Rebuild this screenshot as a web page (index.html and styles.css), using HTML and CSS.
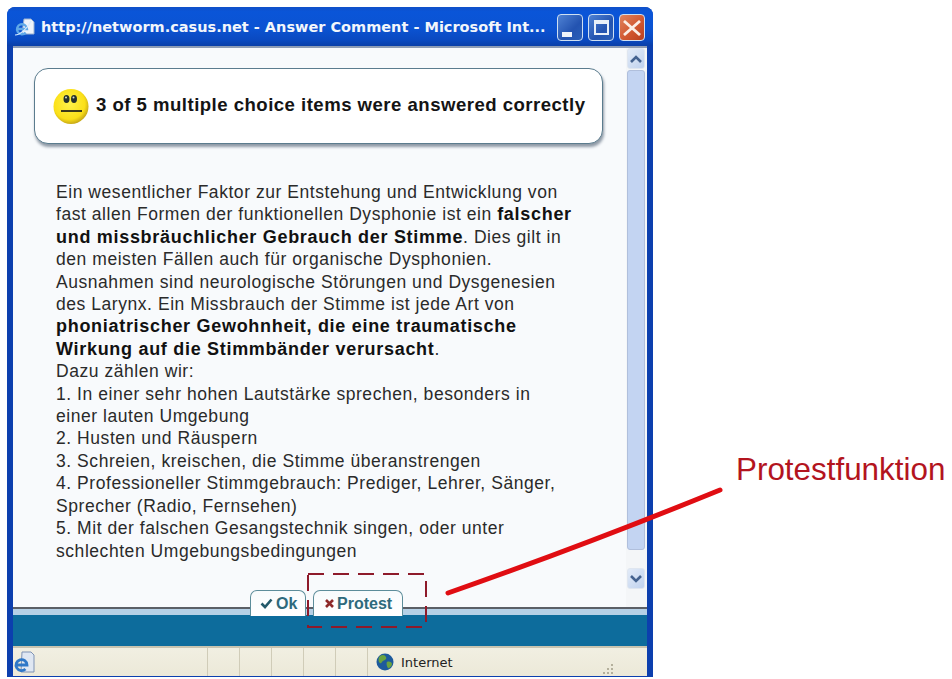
FILE: index.html
```html
<!DOCTYPE html>
<html lang="de">
<head>
<meta charset="utf-8">
<title>Answer Comment</title>
<link rel="stylesheet" href="styles.css">
</head>
<body>
<div class="window">
  <header class="titlebar">
    <svg class="ie-doc" width="20" height="20" viewBox="0 0 20 20">
      <path d="M9 1h7l3 3v12H7z" fill="#eef3fa" stroke="#9ab0d0"/>
      <path d="M2.500 11h9.500a5 5 0 1 0-1.300 3.600" fill="none" stroke="#5fa8e8" stroke-width="2.400"/>
      <path d="M0 17C5 17 13 10 16 3" fill="none" stroke="#d8ecff" stroke-width="1.200"/>
    </svg>
    <span class="title-text">http://networm.casus.net - Answer Comment - Microsoft Int...</span>
    <div class="caption-buttons">
      <span class="cap cap-min"><i></i></span>
      <span class="cap cap-max"><i></i></span>
      <span class="cap cap-close">
        <svg width="18" height="16" viewBox="0 0 18 16"><path d="M1 1l16 14M17 1L1 15" stroke="#fbeee6" stroke-width="2.800"/></svg>
      </span>
    </div>
  </header>

  <div class="client">
    <div class="viewport">
      <main class="page">
        <section class="result-box">
          <svg class="smiley" width="36" height="37" viewBox="0 0 36 37">
            <defs>
              <radialGradient id="face" cx=".45" cy=".42" r=".62">
                <stop offset="0" stop-color="#fff24a"/>
                <stop offset=".72" stop-color="#fbe018"/>
                <stop offset="1" stop-color="#b99a16"/>
              </radialGradient>
            </defs>
            <circle cx="18" cy="18.500" r="17.500" fill="url(#face)"/>
            <ellipse cx="13.500" cy="11" rx="3" ry="4" fill="#26302c"/>
            <ellipse cx="21" cy="11" rx="3" ry="4" fill="#26302c"/>
            <circle cx="13" cy="9.500" r="1" fill="#d8e0d0"/>
            <circle cx="20.500" cy="9.500" r="1" fill="#d8e0d0"/>
            <path d="M8 23h21" stroke="#26261a" stroke-width="1.800"/>
          </svg>
          <h1 class="result-text">3 of 5 multiple choice items were answered correctly</h1>
        </section>
        <p class="comment">Ein wesentlicher Faktor zur Entstehung und Entwicklung von<br>
fast allen Formen der funktionellen Dysphonie ist ein <b>falscher<br>
und missbräuchlicher Gebrauch der Stimme</b>. Dies gilt in<br>
den meisten Fällen auch für organische Dysphonien.<br>
Ausnahmen sind neurologische Störungen und Dysgenesien<br>
des Larynx. Ein Missbrauch der Stimme ist jede Art von<br>
<b>phoniatrischer Gewohnheit, die eine traumatische<br>
Wirkung auf die Stimmbänder verursacht</b>.<br>
Dazu zählen wir:<br>
1. In einer sehr hohen Lautstärke sprechen, besonders in<br>
einer lauten Umgebung<br>
2. Husten und Räuspern<br>
3. Schreien, kreischen, die Stimme überanstrengen<br>
4. Professioneller Stimmgebrauch: Prediger, Lehrer, Sänger,<br>
Sprecher (Radio, Fernsehen)<br>
5. Mit der falschen Gesangstechnik singen, oder unter<br>
schlechten Umgebungsbedingungen</p>
      </main>
      <div class="scrollbar">
        <span class="scroll-btn"><svg width="14" height="10" viewBox="0 0 14 10"><path d="M2 8l5-5 5 5" fill="none" stroke="#44628f" stroke-width="2.600"/></svg></span>
        <span class="scroll-thumb"></span>
        <span class="scroll-btn"><svg width="14" height="10" viewBox="0 0 14 10"><path d="M2 2l5 5 5-5" fill="none" stroke="#44628f" stroke-width="2.600"/></svg></span>
      </div>
    </div>
    <footer class="action-bar">
      <div class="tabs">
        <button class="tab tab-ok">
          <svg width="13" height="11" viewBox="0 0 13 11"><path d="M1.500 5.500l3.500 3.500 6.500-7.500" fill="none" stroke="#23596a" stroke-width="2.600"/></svg>
          Ok
        </button>
        <button class="tab tab-protest">
          <svg width="9" height="9" viewBox="0 0 9 9"><path d="M1 1l7 7M8 1L1 8" fill="none" stroke="#8e2a2a" stroke-width="2.600"/></svg>
          Protest
        </button>
      </div>
      <div class="band"></div>
    </footer>
    <div class="statusbar">
      <svg class="ie-small" width="22" height="24" viewBox="0 0 22 24">
        <path d="M9 2h9l3 3v17H8z" fill="#dfe7f2" stroke="#7f93b5"/>
        <path d="M3 15h11a5.500 5.500 0 1 0-1.600 4" fill="none" stroke="#2f78c8" stroke-width="2.800"/>
      </svg>
      <span class="cell cell-main"></span>
      <span class="cell"></span><span class="cell"></span><span class="cell"></span><span class="cell"></span><span class="cell"></span>
      <span class="cell cell-zone">
        <svg width="18" height="18" viewBox="0 0 18 18">
          <circle cx="9" cy="9" r="8.500" fill="#1d5a9c"/>
          <path d="M4 3c3-2 5-1 6 1s-1 3-3 4-1 3-3 2-2-5 0-7zM11 9c2-1 5 0 5 2s-3 5-4 4-2-5-1-6z" fill="#6aa340"/>
        </svg>
        Internet
      </span>
      <svg class="grip" width="13" height="13" viewBox="0 0 13 13">
        <path d="M10 1h2v2h-2zM6 5h2v2H6zM10 5h2v2h-2zM2 9h2v2H2zM6 9h2v2H6zM10 9h2v2h-2z" fill="#b4b09c"/>
      </svg>
    </div>
  </div>
</div>

<!-- Call-out drawn on top of the window -->
<svg class="callout" width="952" height="679" viewBox="0 0 952 679">
  <rect x="308" y="574" width="118" height="53" fill="none" stroke="#8e1a2a" stroke-width="2" stroke-dasharray="16 9"/>
  <path d="M448 593Q580 547 720 490" fill="none" stroke="#e00d12" stroke-width="5" stroke-linecap="round"/>
</svg>
<div class="callout-label">Protestfunktion</div>
</body>
</html>
```

FILE: styles.css
```css
* { box-sizing: border-box; }

html, body {
  margin: 0;
  height: 100%;
  background: #fff;
  overflow: hidden;
}

/* The popup window */
.window {
  position: absolute;
  left: 7px;
  top: 7px;
  width: 646px;
  height: 670px;
  display: flex;
  flex-direction: column;
  border-radius: 8px 8px 0 0;
  background: #0c3fae;
  padding: 0 6px 1px 6px;
}

.titlebar {
  height: 39px;
  flex: none;
  display: flex;
  align-items: center;
  margin: 0 -6px;
  padding: 0 8px 0 8px;
  border-radius: 8px 8px 0 0;
  background: linear-gradient(#0f50c8 0, #0a55d8 12%, #0b53d2 55%, #0a49c0 85%, #0a3fa8 100%);
  color: #f2f6fb;
}

.ie-doc { flex: none; margin-top: 2px; }

.title-text {
  margin-left: 6px;
  font: bold 14.500px "DejaVu Sans", sans-serif;
  white-space: nowrap;
  flex: 1;
}

.caption-buttons { display: flex; gap: 5px; padding-top: 2px; }

.cap {
  width: 26px;
  height: 27px;
  border: 1px solid #cfe0f2;
  border-radius: 4px;
  display: flex;
  align-items: center;
  justify-content: center;
  background: linear-gradient(135deg, #4f82d4, #2353b0 60%, #2a5fb8);
}

.cap-min i {
  width: 10px;
  height: 5px;
  background: #eef3fa;
  margin: 13px 6px 0 0;
}

.cap-max i {
  width: 15px;
  height: 15px;
  border: 2px solid #e8eff8;
  border-top-width: 4px;
}

.cap-close { background: linear-gradient(135deg, #e0835e, #d0552e 60%, #b8401f); }

/* Everything inside the frame */
.client {
  flex: 1;
  min-height: 0;
  display: flex;
  flex-direction: column;
  background: #f8fafc;
  border-top: 2px solid #8e9cb4;
}

.viewport {
  flex: 1;
  min-height: 0;
  display: flex;
}

.page {
  flex: 1;
  min-width: 0;
  padding: 20px 0 0 21px;
}

.result-box {
  width: 569px;
  height: 76px;
  display: flex;
  align-items: center;
  padding: 0 0 0 18px;
  background: #fff;
  border: 1px solid #5b7c8e;
  border-radius: 14px;
  box-shadow: 1px 3px 3px #8f9aa6;
}

.smiley { flex: none; }

.result-text {
  margin: 0 0 2px 7px;
  font: bold 18.600px "Liberation Sans", sans-serif;
  letter-spacing: .47px;
  color: #141414;
  white-space: nowrap;
}

.comment {
  margin: 37px 0 0 22px;
  font: 17.500px/22.400px "Liberation Sans", sans-serif;
  letter-spacing: .55px;
  color: #2a2a2a;
  white-space: nowrap;
}

.comment b { color: #111; font-size: 18px; line-height: 1; letter-spacing: .7px; }

/* XP style scrollbar */
.scrollbar {
  flex: none;
  width: 21px;
  display: flex;
  flex-direction: column;
  background: #f4f6f8;
  padding: 0 2px 18px 1px;
}

.scroll-btn {
  height: 21px;
  flex: none;
  display: flex;
  align-items: center;
  justify-content: center;
  background: linear-gradient(135deg, #e2ebf8, #c0d2ee);
  border: 1px solid #dfe6f0;
  border-radius: 3px;
}

.scroll-thumb {
  flex: 1;
  background: #c3d4f2;
  border: 1px solid #b0bfdc;
  border-radius: 3px;
  margin: 1px 0 18px;
}

/* Button strip */
.action-bar {
  flex: none;
  height: 39px;
  position: relative;
}

.band {
  height: 39px;
  border-top: 2px solid #5b5f66;
  background: linear-gradient(#b5d0e6 0 6px, #0d6c9c 6px);
}

.tabs {
  position: absolute;
  left: 237px;
  top: -17px;
  display: flex;
  gap: 7px;
}

.tab {
  height: 26px;
  display: flex;
  align-items: center;
  background: linear-gradient(#f8fbfc, #fff);
  border: 1px solid #5d8d9a;
  border-bottom: 0;
  border-radius: 7px 7px 0 0;
  font: bold 16px "Liberation Sans", sans-serif;
  color: #2e6a7c;
  gap: 3px;
}

.tab-ok { width: 56px; padding: 0 0 0 9px; }
.tab-protest { width: 90px; padding: 0 0 0 11px; }

/* Status line */
.statusbar {
  flex: none;
  height: 30px;
  display: flex;
  align-items: center;
  border-top: 2px solid #c8c4b0;
  background: linear-gradient(#f1efe2, #ece9d8);
  font: 13px "DejaVu Sans", sans-serif;
  color: #222;
}

.ie-small { flex: none; margin-left: 0; }

.cell {
  width: 32px;
  height: 100%;
  flex: none;
  border-left: 1px solid #d0ccb8;
  display: flex;
  align-items: center;
  gap: 7px;
}

.cell-main { width: 172px; border-left: 0; }

.cell-zone {
  width: 233px;
  padding-left: 8px;
}

.grip { flex: none; align-self: flex-end; margin-left: 1px; }

/* Call-out */
.callout {
  position: absolute;
  left: 0;
  top: 0;
  pointer-events: none;
}

.callout-label {
  position: absolute;
  left: 736px;
  top: 452px;
  font: 31.400px "Liberation Sans", sans-serif;
  color: #b3141e;
  white-space: nowrap;
}
```
